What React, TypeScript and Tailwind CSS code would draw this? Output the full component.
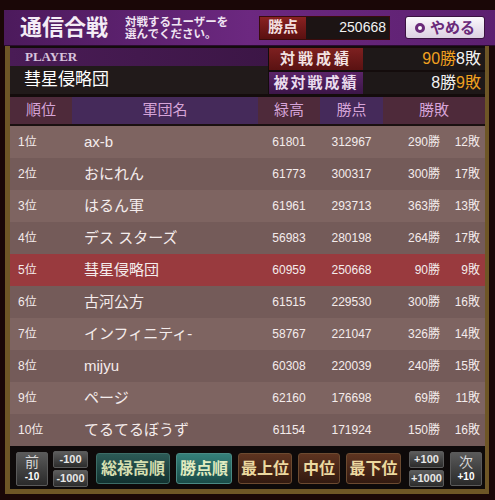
import React from "react";

type Row = [number, string, number, number, number, number];

const rows: Row[] = [
  [1, "ax-b", 61801, 312967, 290, 12],
  [2, "おにれん", 61773, 300317, 300, 17],
  [3, "はるん軍", 61961, 293713, 363, 13],
  [4, "デス スターズ", 56983, 280198, 264, 17],
  [5, "彗星侵略団", 60959, 250668, 90, 9],
  [6, "古河公方", 61515, 229530, 300, 16],
  [7, "インフィニティ-", 58767, 221047, 326, 14],
  [8, "mijyu", 60308, 220039, 240, 15],
  [9, "ページ", 62160, 176698, 69, 11],
  [10, "てるてるぼうず", 61154, 171924, 150, 16]
];

const serif = "font-['Liberation_Serif','Noto_Sans_CJK_JP',serif]";
const sans = "font-['Liberation_Sans','Noto_Sans_CJK_JP',sans-serif]";

function SmallBtn({ label }: { label: string }) {
  return (
    <div className="h-[17px] w-[35px] flex items-center justify-center rounded-[2px] border border-[#5a5a5a] bg-gradient-to-b from-[#5c5c5c] to-[#2c2c2c] text-[11px] font-bold text-[#e8e8e8] leading-none">
      {label}
    </div>
  );
}

function StepBtn({ top, bottom }: { top: string; bottom: string }) {
  return (
    <div className="h-[34px] w-[32px] flex flex-col items-center justify-center rounded-[2px] border border-[#5a5a5a] bg-gradient-to-b from-[#5a5a5a] to-[#2a2a2a] leading-none">
      <span className={`${serif} text-[14px] text-[#d8d8d8]`}>{top}</span>
      <span className="text-[10px] font-bold text-white mt-[2px]">{bottom}</span>
    </div>
  );
}

function SortBtn({ label, tone, w }: { label: string; tone: "teal" | "tealOn" | "brown"; w: string }) {
  const cls =
    tone === "teal"
      ? "from-[#2c5a56] to-[#123230] text-[#d6dfb0] border-[#3c6c66]"
      : tone === "tealOn"
      ? "from-[#35807a] to-[#1a4c48] text-[#e2ecc0] border-[#4a8a84]"
      : "from-[#5e3420] to-[#331a10] text-[#ecd9a0] border-[#6c4a30]";
  return (
    <div
      className={`${w} h-[31px] flex items-center justify-center rounded-[3px] border bg-gradient-to-b ${cls} ${serif} text-[16px] font-bold`}
    >
      {label}
    </div>
  );
}

export default function App() {
  return (
    <div className={`w-[495px] h-[500px] bg-[#1a0707] overflow-hidden ${sans}`}>
      {/* header */}
      <div className="pt-[10px] pl-[4px]">
        <div className="h-[36px] flex items-center bg-gradient-to-r from-[#4c1a5c] via-[#6c2880] to-[#5c2070] border-b border-[#2a0c30]">
          <div className={`${serif} ml-[16px] w-[100px] text-[22px] font-bold text-[#f4ecf6] leading-none`}>
            通信合戦
          </div>
          <div className={`${serif} ml-[5px] w-[130px] text-[11.5px] font-bold text-[#f0e4f2] leading-[12px]`}>
            <div>対戦するユーザーを</div>
            <div>選んでください。</div>
          </div>
          <div className="ml-[4px] flex h-[24px] w-[131px] border border-[#3a0c0c]">
            <div className={`${serif} w-[46px] bg-gradient-to-b from-[#8a2222] to-[#5a1010] flex items-center justify-center text-[15px] font-bold text-[#f2dede]`}>
              勝点
            </div>
            <div className="flex-1 bg-[#1c1414] flex items-center justify-end pr-[3px] text-[14px] text-[#f2f2f2]">
              250668
            </div>
          </div>
          <div className="ml-[15px] h-[23px] w-[80px] flex items-center justify-center gap-[5px] rounded-[3px] border border-[#3a1240] bg-gradient-to-b from-[#fbf8fc] to-[#dcd0e2]">
            <span className="w-[10px] h-[10px] rounded-full border-[3px] border-[#6a2a7a] bg-white"></span>
            <span className="text-[15px] font-bold text-[#6a2a7a] leading-none">やめる</span>
          </div>
        </div>
      </div>

      {/* main frame */}
      <div className="ml-[5px] w-[484px] border-l-[5px] border-r-[4px] border-b-[5px] border-[#6e5626] bg-[#140c0c]">
        {/* player row */}
        <div className="flex pt-[2px] h-[50px]">
          <div className="w-[258px] flex flex-col">
            <div className={`${serif} h-[18px] bg-gradient-to-r from-[#4a1c56] to-[#3c1646] pl-[15px] text-[13px] font-bold text-[#d8c4dc] leading-[18px]`}>
              PLAYER
            </div>
            <div className="h-[28px] bg-[#211a1a] pl-[14px] text-[17px] text-white leading-[28px]">彗星侵略団</div>
          </div>
          <div className="flex-1 flex flex-col gap-[2px] pl-[1px]">
            <div className="h-[22px] flex">
              <div className={`${serif} w-[94px] bg-gradient-to-b from-[#7e2020] to-[#5a1212] flex items-center justify-center text-[15px] font-bold text-[#f2e2e2] tracking-[3px]`}>
                対戦成績
              </div>
              <div className="flex-1 bg-[#1e1818] flex items-center justify-end pr-[4px] text-[16px] leading-none">
                <span className="text-[#f0a020]">90勝</span>
                <span className="text-[#f2f2f2]">8敗</span>
              </div>
            </div>
            <div className="h-[22px] flex">
              <div className={`${serif} w-[94px] bg-gradient-to-b from-[#5a2468] to-[#3c1648] flex items-center justify-center text-[15px] font-bold text-[#eadcee] tracking-[2px]`}>
                被対戦成績
              </div>
              <div className="flex-1 bg-[#1e1818] flex items-center justify-end pr-[4px] text-[16px] leading-none">
                <span className="text-[#f2f2f2]">8勝</span>
                <span className="text-[#f0a020]">9敗</span>
              </div>
            </div>
          </div>
        </div>

        {/* table header */}
        <div className="flex h-[29px] mt-[1px] border-b-[2px] border-[#1a1010] text-[15px] text-[#d6a4d8]">
          <div className="w-[62px] bg-[#4e2a3a] flex items-center justify-center">順位</div>
          <div className="w-[186px] bg-[#452a5a] flex items-center justify-center">軍団名</div>
          <div className="w-[62px] bg-[#4e2a3a] flex items-center justify-center">緑高</div>
          <div className="w-[63px] bg-[#452a5a] flex items-center justify-center">勝点</div>
          <div className="flex-1 bg-[#4e2a3a] flex items-center justify-center">勝敗</div>
        </div>

        {/* rows */}
        <div className="flex flex-col">
          {rows.map(([rank, name, roku, pts, win, lose], i) => {
            const bg = rank === 5 ? "bg-[#993a3e]" : i % 2 === 0 ? "bg-[#7e6461]" : "bg-[#745b59]";
            return (
              <div key={rank} className={`flex h-[32px] items-center text-[12px] text-[#f4ecec] ${bg}`}>
                <div className="w-[74px] pl-[8px]">{rank}位</div>
                <div className="w-[174px] text-[15px]">{name}</div>
                <div className="w-[62px] text-center">{roku}</div>
                <div className="w-[63px] text-center">{pts}</div>
                <div className="w-[57px] text-right">{win}勝</div>
                <div className="w-[40px] text-right">{lose}敗</div>
              </div>
            );
          })}
        </div>

        {/* bottom bar */}
        <div className="h-[43px] flex items-center bg-[#0e0a0a] pl-[6px] pr-[3px] pt-[2px]">
          <StepBtn top="前" bottom="-10" />
          <div className="ml-[5px] flex flex-col gap-[2px]">
            <SmallBtn label="-100" />
            <SmallBtn label="-1000" />
          </div>
          <div className="ml-[8px] flex gap-[6px]">
            <SortBtn label="総禄高順" tone="teal" w="w-[74px]" />
            <SortBtn label="勝点順" tone="tealOn" w="w-[56px]" />
            <SortBtn label="最上位" tone="brown" w="w-[54px]" />
            <SortBtn label="中位" tone="brown" w="w-[42px]" />
            <SortBtn label="最下位" tone="brown" w="w-[55px]" />
          </div>
          <div className="ml-[8px] flex flex-col gap-[2px]">
            <SmallBtn label="+100" />
            <SmallBtn label="+1000" />
          </div>
          <div className="ml-[6px]">
            <StepBtn top="次" bottom="+10" />
          </div>
        </div>
      </div>
    </div>
  );
}
